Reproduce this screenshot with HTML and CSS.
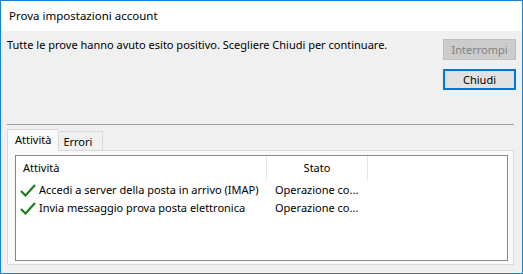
FILE: index.html
```html
<!DOCTYPE html>
<html lang="it">
<head>
  <meta charset="UTF-8">
  <title>Prova impostazioni account</title>
  <link rel="stylesheet" href="styles.css">
</head>
<body>
  <div class="window">
    <div class="titlebar">Prova impostazioni account</div>
    <div class="content">
      <div class="top">
        <div class="message">Tutte le prove hanno avuto esito positivo. Scegliere Chiudi per continuare.</div>
        <div class="buttons">
          <button class="btn" disabled>Interrompi</button>
          <button class="btn default">Chiudi</button>
        </div>
      </div>
      <div class="separator"></div>
      <div class="tabs">
        <div class="tab active">Attività</div>
        <div class="tab">Errori</div>
      </div>
      <div class="panel">
        <div class="listbox">
          <div class="row header">
            <div class="col name">Attività</div>
            <div class="col state">Stato</div>
          </div>
          <div class="row">
            <div class="col name">
              <svg class="check" width="16" height="14" viewBox="0 0 16 14"><path d="M1 8 L5.5 12.5 L15 2" fill="none" stroke="#1f7d1f" stroke-width="2.2"/></svg>
              Accedi a server della posta in arrivo (IMAP)
            </div>
            <div class="col state">Operazione co...</div>
          </div>
          <div class="row">
            <div class="col name">
              <svg class="check" width="16" height="14" viewBox="0 0 16 14"><path d="M1 8 L5.5 12.5 L15 2" fill="none" stroke="#1f7d1f" stroke-width="2.2"/></svg>
              Invia messaggio prova posta elettronica
            </div>
            <div class="col state">Operazione co...</div>
          </div>
        </div>
      </div>
    </div>
  </div>
</body>
</html>
```

FILE: styles.css
```css
html, body {
  margin: 0;
  padding: 0;
  background: #ffffff;
  font-family: "Noto Sans", "Open Sans", sans-serif;
  font-size: 11px;
  color: #000;
}
.window {
  width: 523px;
  height: 274px;
  box-sizing: border-box;
  border: 1px solid #1883d7;
  display: flex;
  flex-direction: column;
}
.titlebar {
  height: 30px;
  line-height: 29px;
  padding-left: 8px;
  font-size: 11.5px;
  background: #fff;
}
.content {
  flex: 1;
  background: #f0f0f0;
  padding: 0 6px 8px 6px;
  display: flex;
  flex-direction: column;
}
.top {
  display: flex;
  justify-content: space-between;
  padding-top: 8px;
}
.message {
  line-height: 16px;
  margin-top: -2px;
}
.buttons {
  display: flex;
  flex-direction: column;
  gap: 9px;
}
.btn {
  width: 73px;
  height: 21px;
  padding: 0;
  font-family: inherit;
  font-size: 11px;
  background: #e1e1e1;
  border: 1px solid #adadad;
  color: #000;
  box-sizing: border-box;
}
.btn:disabled {
  background: #cccccc;
  border-color: #bfbfbf;
  color: #838383;
}
.btn.default {
  border: 2px solid #0078d7;
}
.separator {
  margin: 34px 2px 0 0;
  border-top: 1px solid #a0a0a0;
}
.tabs {
  display: flex;
  align-items: flex-end;
  margin-top: 4px;
  height: 21px;
  position: relative;
  z-index: 1;
}
.tab {
  height: 19px;
  line-height: 19px;
  padding: 0 10px 0 4px;
  box-sizing: border-box;
  border: 1px solid #d9d9d9;
  border-bottom: none;
  background: #f0f0f0;
}
.tab.active {
  height: 22px;
  line-height: 19px;
  padding: 0 7px;
  background: #f9f9f9;
  margin-bottom: -1px;
  border-right: none;
}
.panel {
  flex: 1;
  margin-right: 2px;
  border: 1px solid #d9d9d9;
  background: #f9f9f9;
  padding: 4px 5px 3px 7px;
  display: flex;
}
.listbox {
  flex: 1;
  background: #fff;
  border: 1px solid #828790;
}
.row {
  display: flex;
  height: 18px;
  line-height: 18px;
}
.row.header {
  height: 24px;
  line-height: 24px;
  margin-bottom: 1px;
}
.col {
  box-sizing: border-box;
  white-space: nowrap;
}
.col.name {
  width: 251px;
  padding-left: 4px;
  display: flex;
  align-items: center;
  gap: 3px;
}
.col.state {
  width: 101px;
  padding-left: 8px;
}
.header .col.name {
  padding-left: 7px;
  border-right: 1px solid #e5e5e5;
}
.header .col.state {
  text-align: center;
  padding-left: 0;
  border-right: 1px solid #e5e5e5;
}
.check {
  flex: none;
}
```
